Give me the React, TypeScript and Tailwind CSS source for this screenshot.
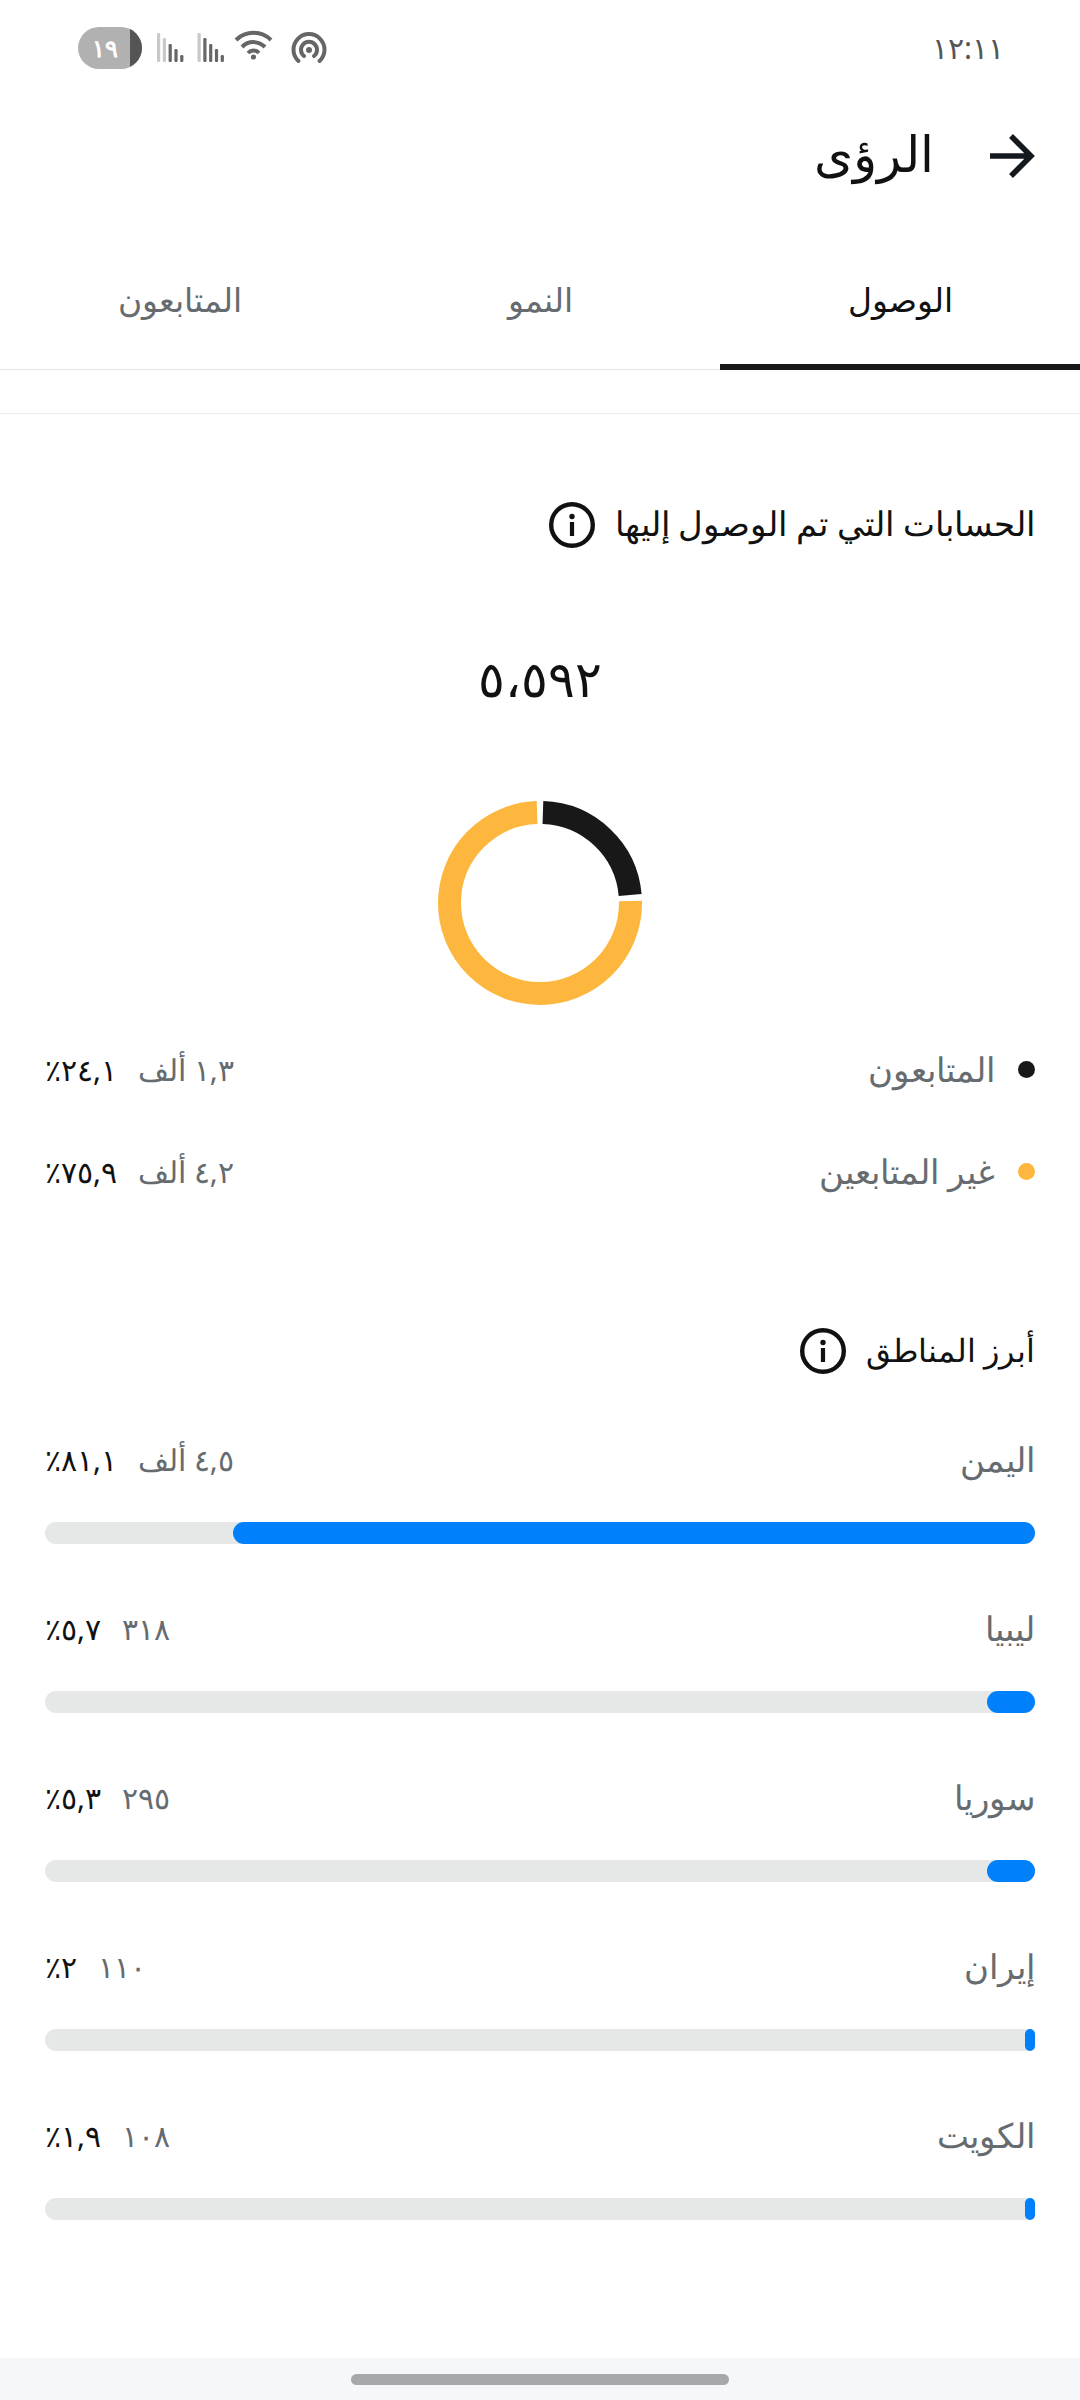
const font = "font-['Noto_Sans','Liberation_Sans',sans-serif]";

const legend = [
  { label: "المتابعون", value: "١,٣ ألف", pct: "٢٤,١٪", dot: "bg-[#181818]" },
  { label: "غير المتابعين", value: "٤,٢ ألف", pct: "٧٥,٩٪", dot: "bg-[#fdb73e]" },
];

const regions = [
  { name: "اليمن", value: "٤,٥ ألف", pct: "٨١,١٪", fill: "w-[802px]" },
  { name: "ليبيا", value: "٣١٨", pct: "٥,٧٪", fill: "w-[48px]" },
  { name: "سوريا", value: "٢٩٥", pct: "٥,٣٪", fill: "w-[48px]" },
  { name: "إيران", value: "١١٠", pct: "٢٪", fill: "w-[10px]" },
  { name: "الكويت", value: "١٠٨", pct: "١,٩٪", fill: "w-[10px]" },
];

function InfoIcon() {
  return (
    <svg width="46" height="46" viewBox="0 0 46 46" className="mt-[3px] shrink-0">
      <circle cx="23" cy="23" r="20.8" fill="none" stroke="#111" strokeWidth="4.4" />
      <circle cx="23" cy="14.5" r="2.7" fill="#111" />
      <rect x="20.9" y="20" width="4.2" height="14" fill="#111" />
    </svg>
  );
}

function StatusIcons() {
  const bars = (x: number, light: number) =>
    [33, 38, 44, 49, 55].map((top, i) => (
      <rect key={i} x={x + i * 5.8} y={top} width="3.2" height={62 - top} rx="1.2" fill={i < light ? "#c9c9c9" : "#666"} />
    ));
  return (
    <svg width="198" height="95" viewBox="142 0 198 95" className="block">
      {bars(157, 2)}
      {bars(197.5, 1)}
      <g fill="none" stroke="#666" strokeWidth="4">
        <path d="M236 40a25 25 0 0 1 35 0" />
        <path d="M242 47a16 16 0 0 1 23 0" />
        <path d="M248 53a7.5 7.5 0 0 1 11 0" />
        <path d="M298.5 61a15.5 15.5 0 1 1 21 0" strokeLinecap="round" />
        <path d="M304 56a8 8 0 1 1 10 0" strokeLinecap="round" />
      </g>
      <circle cx="253.5" cy="57" r="2.6" fill="#666" />
      <circle cx="309" cy="50" r="3" fill="#666" />
    </svg>
  );
}

function Donut() {
  return (
    <svg width="204" height="204" viewBox="0 0 204 204">
      <g fill="none" strokeWidth="23" transform="rotate(-90 102 102)">
        <circle cx="102" cy="102" r="90.5" pathLength={360} stroke="#181818" strokeDasharray="83 277" strokeDashoffset="-1.9" />
        <circle cx="102" cy="102" r="90.5" pathLength={360} stroke="#fdb73e" strokeDasharray="269.4 90.6" strokeDashoffset="-88.7" />
      </g>
    </svg>
  );
}

export default function App() {
  return (
    <div dir="rtl" className={`${font} flex h-[2400px] w-[1080px] flex-col bg-white text-[#111]`}>
      <div className="flex h-[95px] items-center justify-between pl-[78px] pr-[76px]">
        <span className="text-[30px] text-[#555]">١٢:١١</span>
        <div dir="ltr" className="flex items-center">
          <div className="relative flex h-[42px] w-[64px] items-center overflow-hidden rounded-full bg-[#b1b1b1] pl-[14px]">
            <span className="text-[24px] font-semibold leading-none text-white">١٩</span>
            <div className="absolute inset-y-0 right-0 w-[12px] bg-[#555]" />
          </div>
          <StatusIcons />
        </div>
      </div>

      <div className="flex h-[115px] items-center pr-[45px]">
        <svg width="50" height="50" viewBox="0 0 50 50" className="mt-[6px] shrink-0">
          <path d="M5 25H46M26 5L46 25L26 45" fill="none" stroke="#14191e" strokeWidth="5.5" />
        </svg>
        <h1 className="mr-[51px] text-[50px] font-normal leading-none">الرؤى</h1>
      </div>

      <div className="flex h-[160px] border-b border-[#e6e6e6]">
        <div className="relative flex flex-1 items-center justify-center pt-[20px] text-[33px]">
          الوصول
          <div className="absolute inset-x-0 -bottom-px h-[6px] bg-[#181818]" />
        </div>
        <div className="flex flex-1 items-center justify-center pt-[20px] text-[33px] text-[#666b70]">النمو</div>
        <div className="flex flex-1 items-center justify-center pt-[20px] text-[33px] text-[#666b70]">المتابعون</div>
      </div>

      <div className="mt-[43px] border-t border-[#ececec] px-[45px]">
        <div className="mt-[84px] flex items-center gap-[20px]">
          <span className="text-[34px]">الحسابات التي تم الوصول إليها</span>
          <InfoIcon />
        </div>
        <div className="mt-[94px] text-center text-[50px] font-medium leading-[70px] [direction:ltr] [unicode-bidi:bidi-override]">٥،٥٩٢</div>
        <div className="mt-[88px] flex justify-center">
          <Donut />
        </div>

        <div className="mt-[13px] flex flex-col">
          {legend.map((row) => (
            <div key={row.label} className="flex h-[102px] items-center justify-between">
              <div className="flex items-center gap-[23px]">
                <span className={`h-[17px] w-[17px] rounded-full ${row.dot}`} />
                <span className="text-[34px] text-[#666b70]">{row.label}</span>
              </div>
              <div className="flex items-center gap-[21px] text-[30px]">
                <span className="text-[#666b70]">{row.value}</span>
                <span>{row.pct}</span>
              </div>
            </div>
          ))}
        </div>

        <div className="mt-[103px] flex items-center gap-[20px]">
          <span className="text-[32px]">أبرز المناطق</span>
          <InfoIcon />
        </div>

        <div className="mt-[50px] flex flex-col gap-[49px]">
          {regions.map((r) => (
            <div key={r.name} className="flex flex-col">
              <div className="flex h-[70px] items-center justify-between">
                <span className="text-[34px] text-[#666b70]">{r.name}</span>
                <div className="flex items-center gap-[21px] text-[30px]">
                  <span className="text-[#666b70]">{r.value}</span>
                  <span>{r.pct}</span>
                </div>
              </div>
              <div className="mt-[28px] flex h-[22px] rounded-full bg-[#e6e8e8]">
                <div className={`h-full rounded-full bg-[#0080fb] ${r.fill}`} />
              </div>
            </div>
          ))}
        </div>
      </div>

      <div className="mt-auto flex h-[42px] justify-center bg-[#f6f7f9] pt-[16px]">
        <div className="h-[11px] w-[378px] rounded-full bg-[#a7a8aa]" />
      </div>
    </div>
  );
}
